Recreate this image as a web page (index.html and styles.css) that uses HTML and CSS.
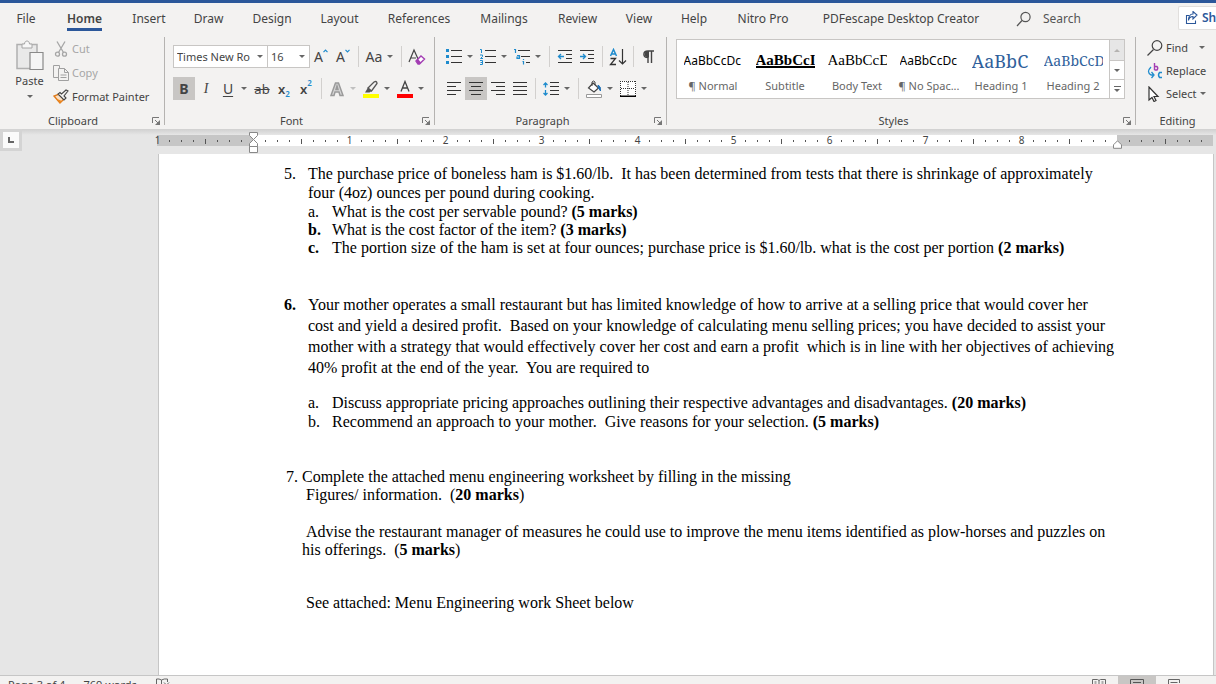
FILE: index.html
```html
<!DOCTYPE html>
<html lang="en">
<head>
<meta charset="utf-8">
<title>Document editor</title>
<link rel="stylesheet" href="styles.css">
</head>
<body>
<div class="app">
  <header class="topbar">
    <nav class="tabs">
      <button class="tab">File</button>
      <button class="tab active">Home</button>
      <button class="tab">Insert</button>
      <button class="tab">Draw</button>
      <button class="tab">Design</button>
      <button class="tab">Layout</button>
      <button class="tab">References</button>
      <button class="tab">Mailings</button>
      <button class="tab">Review</button>
      <button class="tab">View</button>
      <button class="tab">Help</button>
      <button class="tab">Nitro Pro</button>
      <button class="tab">PDFescape Desktop Creator</button>
    </nav>
    <label class="search">
      <svg width="16" height="16" viewBox="0 0 16 16" fill="none" stroke="#555" stroke-width="1.2"><circle cx="9.5" cy="6" r="4.6"/><path d="M6 9.5L1 15"/></svg>
      <input type="text" placeholder="Search" aria-label="Search">
    </label>
    <button class="share">
      <svg width="13" height="14" viewBox="0 0 13 14" fill="none" stroke="#2b579a" stroke-width="1.1"><path d="M4 4.5H1.5v8h9V9.500"/><path d="M3.500 9.500C4 6.500 5.500 5.500 8 5.500V8l4-4-4-3.500V3C5 3 3.500 5.500 3.500 9.500z"/></svg>
      <span>Share</span>
    </button>
  </header>

  <section class="ribbon">
    <div class="group clipboard">
      <div class="body">
        <button class="paste">
          <svg width="28" height="32" viewBox="0 0 28 32" fill="none"><path d="M1 4.500h20v24H1z" fill="#e9e9e9" stroke="#b0b0b0" stroke-width="1.500"/><path d="M6 8V4h2.500c0-4 5-4 5 0H16v4z" fill="#f7f7f7" stroke="#a6a6a6"/><path d="M14 12.500h13v17H14z" fill="#f5f5f5" stroke="#8a8a8a" stroke-width="1.200"/></svg>
          <span>Paste</span>
          <i class="arrow"></i>
        </button>
        <div class="stack">
          <button class="cmd off"><svg width="16" height="16" viewBox="0 0 16 16" fill="none" stroke="#a6a6a6" stroke-width="1.300"><path d="M4 0.500l6.500 11M12 0.500L5.500 11.500"/><circle cx="4.500" cy="13.200" r="2"/><circle cx="11.500" cy="13.200" r="2"/></svg><span>Cut</span></button>
          <button class="cmd off"><svg width="16" height="16" viewBox="0 0 16 16" fill="#f3f2f1" stroke="#a0a0a0"><path d="M.5.500h6v12h-6z"/><path d="M5.500 3.500h6l4 4v8h-10z"/><path d="M11.500 3.500v4h4M7.500 10h6M7.500 12.500h6" fill="none"/></svg><span>Copy</span></button>
          <button class="cmd"><svg width="16" height="16" viewBox="0 0 16 16" fill="none"><path d="M1 7l6 7 4-4-5-5z" fill="#fbe0c4" stroke="#e07b1a" stroke-width="1.400"/><path d="M3 9.500l4 4.500 2-2z" fill="#ee8a22"/><path d="M5 5l6 6 2-2-2-2 4-5-2-1-4.500 4L7 3.500z" fill="#f3f2f1" stroke="#444" stroke-width="1.100"/></svg><span>Format Painter</span></button>
        </div>
      </div>
      <div class="caption"><span>Clipboard</span><svg class="launch" width="9" height="8" viewBox="0 0 9 8"><use href="#launcher"/></svg></div>
    </div>

    <div class="group font">
      <div class="body rows">
        <div class="row">
          <span class="combo name"><select aria-label="Font"><option>Times New Ro</option></select></span>
          <span class="combo size"><select aria-label="Font size"><option>16</option></select></span>
          <button class="tool" aria-label="Grow font"><span class="glyph">A</span><svg class="sup" width="5" height="4" viewBox="0 0 5 4" fill="none" stroke="#1e8bcd" stroke-width="1.200"><path d="M.5 3.200l2-2 2 2"/></svg></button>
          <button class="tool" aria-label="Shrink font"><span class="glyph">A</span><svg class="sup" width="5" height="4" viewBox="0 0 5 4" fill="none" stroke="#1e8bcd" stroke-width="1.200"><path d="M.5.800l2 2 2-2"/></svg></button>
          <i class="sep"></i>
          <button class="tool glyph">Aa</button><button class="drop" aria-label="Change case"><i class="arrow"></i></button>
          <i class="sep"></i>
          <button class="tool" aria-label="Clear formatting"><svg width="18" height="18" viewBox="0 0 18 18" fill="none"><path d="M1 14L6 2l4.500 10M3 10h5" stroke="#444" stroke-width="1.200"/><path d="M8 13l5-5 3.500 3-5 5H10z" fill="#fff" stroke="#a33db3" stroke-width="1.400"/><path d="M8 13l2-2 3 3.500-1.500 1.500H10z" fill="#a33db3"/></svg></button>
        </div>
        <div class="row">
          <button class="tool on glyph strong">B</button>
          <button class="tool glyph italic">I</button>
          <button class="tool glyph under">U</button><button class="drop" aria-label="Underline style"><i class="arrow"></i></button>
          <button class="tool glyph strike">ab</button>
          <button class="tool glyph bold">x<sub>2</sub></button>
          <button class="tool glyph bold">x<sup>2</sup></button>
          <i class="sep"></i>
          <button class="tool" aria-label="Text effects"><svg width="16" height="16" viewBox="0 0 16 16" fill="none"><path d="M2 14.500L6.500 2h3L14 14.500h-3L10 11H6l-1 3.500zM7 8.500h2L8 5z" fill="#d6d6d6" stroke="#9a9a9a" stroke-width="1.500"/></svg></button><button class="drop off" aria-label="Effects menu"><i class="arrow"></i></button>
          <button class="tool" aria-label="Highlight"><svg width="18" height="18" viewBox="0 0 18 18"><path d="M6 8l6-6q3-1.500 3 1.500L9.500 11z" fill="#f3f2f1" stroke="#555" stroke-width="1.300"/><path d="M6 7.500L9.500 11l-2 1.500H3z" fill="#555"/><path d="M1 14h16v4H1z" fill="#ff0"/></svg></button><button class="drop" aria-label="Highlight colour"><i class="arrow"></i></button>
          <button class="tool" aria-label="Font colour"><svg width="18" height="18" viewBox="0 0 18 18"><path d="M5 11.500L9 1.500l4 10M6.500 8h5" fill="none" stroke="#444" stroke-width="1.300"/><path d="M1 14h16v4H1z" fill="#f00"/></svg></button><button class="drop" aria-label="Font colour menu"><i class="arrow"></i></button>
        </div>
      </div>
      <div class="caption"><span>Font</span><svg class="launch" width="9" height="8" viewBox="0 0 9 8"><use href="#launcher"/></svg></div>
    </div>

    <div class="group paragraph">
      <div class="body rows">
        <div class="row">
          <button class="tool" aria-label="Bullets"><svg width="16" height="16" viewBox="0 0 16 16"><path d="M0 0h3v3H0zM0 6h3v3H0zM0 12h3v3H0z" fill="#1e8bcd"/><path d="M5 1h11v1H5zM5 7h11v1H5zM5 13h11v1H5z" fill="#333"/></svg></button><button class="drop" aria-label="Bullet styles"><i class="arrow"></i></button>
          <button class="tool" aria-label="Numbering"><svg width="16" height="16" viewBox="0 0 16 16"><path d="M0 .5h1.500V4M0 6h2.500v1.500L.5 9.500H3M0 11.500h2.500v4H0M.5 13.500h2" fill="none" stroke="#1e8bcd"/><path d="M5 1h11v1H5zM5 7h11v1H5zM5 13h11v1H5z" fill="#333"/></svg></button><button class="drop" aria-label="Number styles"><i class="arrow"></i></button>
          <button class="tool" aria-label="Multilevel list"><svg width="16" height="16" viewBox="0 0 16 16"><path d="M0 .5h1.500V4M3 6.500h2.500v3H3v-1.500h2.500M9.500 10v1M8.500 12.500h1v3" fill="none" stroke="#1e8bcd" stroke-width="1.200"/><path d="M4 1h12v1H4zM7 7h9v1H7zM12 13h4v1h-4z" fill="#333"/></svg></button><button class="drop" aria-label="List levels"><i class="arrow"></i></button>
          <i class="sep"></i>
          <button class="tool" aria-label="Decrease indent"><svg width="16" height="16" viewBox="0 0 16 16"><path d="M1 1h14v1H1zM9 5h6v1H9zM9 9h6v1H9zM1 13h14v1H1z" fill="#333"/><path d="M7 7.500H1.500M4 5L1.500 7.500 4 10" fill="none" stroke="#1e8bcd" stroke-width="1.300"/></svg></button>
          <button class="tool" aria-label="Increase indent"><svg width="16" height="16" viewBox="0 0 16 16"><path d="M1 1h14v1H1zM9 5h6v1H9zM9 9h6v1H9zM1 13h14v1H1z" fill="#333"/><path d="M1 7.500h5.500M4 5l2.500 2.500L4 10" fill="none" stroke="#1e8bcd" stroke-width="1.300"/></svg></button>
          <i class="sep"></i>
          <button class="tool" aria-label="Sort"><svg width="18" height="18" viewBox="0 0 18 18" fill="none"><path d="M1.500 8L4.500 1.500 7.500 8M2.500 6h4" stroke="#1e8bcd" stroke-width="1.500"/><path d="M1.500 10.500h5l-5 6h5.500" stroke="#333" stroke-width="1.300"/><path d="M13.500 1v15M10 12.500l3.500 3.500 3.500-3.500" stroke="#333" stroke-width="1.200"/></svg></button>
          <i class="sep"></i>
          <button class="tool" aria-label="Show paragraph marks"><svg width="12" height="14" viewBox="0 0 12 14"><path d="M11 1H5C-.5 1-.5 7.500 5 7.500V13M8.500 1v12" fill="none" stroke="#444" stroke-width="1.400"/><path d="M6 1C0 .5 0 7.500 6 7.500z" fill="#444"/></svg></button>
        </div>
        <div class="row">
          <button class="tool" aria-label="Align left"><svg width="14" height="14" viewBox="0 0 14 14"><path d="M0 0h14v1H0zM0 4h9v1H0zM0 8h14v1H0zM0 12h9v1H0z" fill="#333"/></svg></button>
          <button class="tool on" aria-label="Center"><svg width="14" height="14" viewBox="0 0 14 14"><path d="M0 0h14v1H0zM2 4h10v1H2zM0 8h14v1H0zM2 12h10v1H2z" fill="#333"/></svg></button>
          <button class="tool" aria-label="Align right"><svg width="14" height="14" viewBox="0 0 14 14"><path d="M0 0h14v1H0zM5 4h9v1H5zM0 8h14v1H0zM5 12h9v1H5z" fill="#333"/></svg></button>
          <button class="tool" aria-label="Justify"><svg width="14" height="14" viewBox="0 0 14 14"><path d="M0 0h14v1H0zM0 4h14v1H0zM0 8h14v1H0zM0 12h14v1H0z" fill="#333"/></svg></button>
          <i class="sep"></i>
          <button class="tool" aria-label="Line spacing"><svg width="16" height="14" viewBox="0 0 16 14"><path d="M7 0h9v1H7zM7 4h9v1H7zM7 8h9v1H7zM7 12h9v1H7z" fill="#333"/><path d="M2.500 1v4.500M.5 3l2-2 2 2M2.500 8v5M.5 11l2 2 2-2" fill="none" stroke="#1e8bcd" stroke-width="1.300"/></svg></button><button class="drop" aria-label="Spacing options"><i class="arrow"></i></button>
          <i class="sep"></i>
          <button class="tool" aria-label="Shading"><svg width="18" height="18" viewBox="0 0 18 18"><path d="M8 3l5.500 5L9 12 3.500 8z" fill="#fff" stroke="#444" stroke-width="1.200"/><path d="M7 6V2q1.500-2 3 0v3" fill="none" stroke="#444"/><path d="M13 5q3 1 2.500 6l-2-3z" fill="#1e6fb5" stroke="#1e6fb5"/><path d="M1.500 14.500h15v3h-15z" fill="#fff" stroke="#999"/></svg></button><button class="drop" aria-label="Shading colour"><i class="arrow"></i></button>
          <button class="tool" aria-label="Borders"><svg width="16" height="16" viewBox="0 0 16 16"><path d="M0 0h16v16H0z" fill="#fff"/><path d="M0 .5h16M.5 0v15M15.500 0v15M8 1v14M1 7.500h14" fill="none" stroke="#333" stroke-dasharray="1 1"/><path d="M0 14.500h16V16H0z" fill="#000"/></svg></button><button class="drop" aria-label="Border styles"><i class="arrow"></i></button>
        </div>
      </div>
      <div class="caption"><span>Paragraph</span><svg class="launch" width="9" height="8" viewBox="0 0 9 8"><use href="#launcher"/></svg></div>
    </div>

    <div class="group styles">
      <div class="body">
        <div class="gallery">
          <button class="style"><span class="sample">AaBbCcDc</span><span>¶ Normal</span></button>
          <button class="style"><span class="sample serif subtitle">AaBbCcI</span><span>Subtitle</span></button>
          <button class="style"><span class="sample serif">AaBbCcDd</span><span>Body Text</span></button>
          <button class="style"><span class="sample">AaBbCcDc</span><span>¶ No Spac...</span></button>
          <button class="style"><span class="sample heading large">AaBbC</span><span>Heading 1</span></button>
          <button class="style"><span class="sample heading">AaBbCcD</span><span>Heading 2</span></button>
          <div class="scroller">
            <button class="off" aria-label="Previous styles"><i class="arrow up"></i></button>
            <button aria-label="Next styles"><i class="arrow"></i></button>
            <button class="more" aria-label="More styles"><i class="arrow"></i></button>
          </div>
        </div>
      </div>
      <div class="caption"><span>Styles</span><svg class="launch" width="9" height="8" viewBox="0 0 9 8"><use href="#launcher"/></svg></div>
    </div>

    <div class="group editing">
      <div class="body stack">
        <button class="cmd"><svg width="16" height="16" viewBox="0 0 16 16" fill="none" stroke="#444" stroke-width="1.200"><circle cx="10" cy="5.500" r="4.800"/><path d="M6.500 9.500L.5 15.500"/></svg><span>Find</span><i class="arrow far"></i></button>
        <button class="cmd"><svg width="16" height="16" viewBox="0 0 16 16" fill="none"><path d="M7.500 0v7M7.500 3.500h2.500q1.500 1.500 0 3.500H7.500" stroke="#a33db3" stroke-width="1.400"/><path d="M15 9.500h-2.500q-2 2.500 0 5H15" stroke="#1e8bcd" stroke-width="1.400"/><path d="M4 4Q-1 9 4 12h2M4.500 9L7 12l-2.500 3" stroke="#1e8bcd" stroke-width="1.300"/></svg><span>Replace</span></button>
        <button class="cmd"><svg width="16" height="16" viewBox="0 0 16 16" fill="#fff" stroke="#333" stroke-width="1.200"><path d="M2 1v13l3-2.500 2 4 2-1-2-4h4z"/></svg><span>Select</span><i class="arrow"></i></button>
      </div>
      <div class="caption"><span>Editing</span></div>
    </div>
  </section>

  <div class="ruler">
    <button class="tabstop" aria-label="Tab stop"><i></i></button>
    <div class="scale">
      <div class="inch shade"><b>1</b><svg width="96" height="11"><use href="#ticks"/></svg></div>
      <div class="inch"><b></b><svg width="96" height="11"><use href="#ticks"/></svg></div>
      <div class="inch"><b>1</b><svg width="96" height="11"><use href="#ticks"/></svg></div>
      <div class="inch"><b>2</b><svg width="96" height="11"><use href="#ticks"/></svg></div>
      <div class="inch"><b>3</b><svg width="96" height="11"><use href="#ticks"/></svg></div>
      <div class="inch"><b>4</b><svg width="96" height="11"><use href="#ticks"/></svg></div>
      <div class="inch"><b>5</b><svg width="96" height="11"><use href="#ticks"/></svg></div>
      <div class="inch"><b>6</b><svg width="96" height="11"><use href="#ticks"/></svg></div>
      <div class="inch"><b>7</b><svg width="96" height="11"><use href="#ticks"/></svg></div>
      <div class="inch"><b>8</b><svg width="96" height="11"><use href="#ticks"/></svg></div>
      <div class="inch shade"><b></b><svg width="96" height="11"><use href="#ticks"/></svg></div>
      <svg class="marker left" width="10" height="22" viewBox="0 0 10 22" fill="#fff" stroke="#888"><path d="M.5.500h8v3l-4 4-4-4zM4.500 7.500l4 4v3h-8v-3zM.5 14.500h8v6h-8z"/></svg>
      <svg class="marker right" width="10" height="9" viewBox="0 0 10 9" fill="#fff" stroke="#888"><path d="M4.500.800l4 4v3.500h-8V4.800z"/></svg>
    </div>
  </div>

  <main class="canvas">
    <article class="page">
      <section class="item q5">
        <span>5.</span>
        <div>
          <p class="stem">The purchase price of boneless ham is $1.60/lb.&nbsp; It has been determined from tests that there is shrinkage of approximately<br>four (4oz) ounces per pound during cooking.</p>
          <div class="sub"><span>a.</span><p>What is the cost per servable pound? <b>(5 marks)</b></p></div>
          <div class="sub"><b>b.</b><p>What is the cost factor of the item? <b>(3 marks)</b></p></div>
          <div class="sub"><b>c.</b><p>The portion size of the ham is set at four ounces; purchase price is $1.60/lb. what is the cost per portion <b>(2 marks)</b></p></div>
        </div>
      </section>
      <section class="item q6">
        <b>6.</b>
        <div>
          <p class="loose">Your mother operates a small restaurant but has limited knowledge of how to arrive at a selling price that would cover her<br>cost and yield a desired profit.&nbsp; Based on your knowledge of calculating menu selling prices; you have decided to assist your<br>mother with a strategy that would effectively cover her cost and earn a profit&nbsp; which is in line with her objectives of achieving<br>40% profit at the end of the year.&nbsp; You are required to</p>
          <div class="sub"><span>a.</span><p>Discuss appropriate pricing approaches outlining their respective advantages and disadvantages. <b>(20 marks)</b></p></div>
          <div class="sub"><span>b.</span><p>Recommend an approach to your mother.&nbsp; Give reasons for your selection. <b>(5 marks)</b></p></div>
        </div>
      </section>
      <section class="q7">
        <p>7. Complete the attached menu engineering worksheet by filling in the missing</p>
        <p class="inset">&nbsp;Figures/ information.&nbsp; (<b>20 marks</b>)</p>
        <p class="inset advise">&nbsp;Advise the restaurant manager of measures he could use to improve the menu items identified as plow-horses and puzzles on<br>his offerings.&nbsp; (<b>5 marks</b>)</p>
        <p class="inset see">&nbsp;See attached: Menu Engineering work Sheet below</p>
      </section>
    </article>
  </main>

  <footer class="status">
    <span>Page 3 of 4</span>
    <span>769 words</span>
    <svg width="16" height="14" viewBox="0 0 16 14" fill="none" stroke="#666"><path d="M6.500 2Q4 .5 1.500 1v10.500q3-.5 5 1zq2.500-1.500 6-1v3M9 4.500l5 5M14 4.500l-5 5"/></svg>
    <div class="views">
      <button aria-label="Read mode"><svg width="14" height="12" viewBox="0 0 14 12" fill="none" stroke="#666"><path d="M.5.500h5l1.500 1 1.500-1h5v9h-5l-1.500 1-1.500-1h-5zM7 1.500v9M2.500 3h2M2.500 5h2M9.500 3h2M9.500 5h2"/></svg></button>
      <button class="on" aria-label="Print layout"><svg width="14" height="12" viewBox="0 0 14 12" fill="none" stroke="#555"><path d="M.5.500h13v11H.5zM3 3.500h8M3 6h8M3 8.500h8"/></svg></button>
      <button aria-label="Web layout"><svg width="14" height="12" viewBox="0 0 14 12" fill="none" stroke="#666"><path d="M6 10.500H.5v-10h11V4M2.500 3.500h7M2.500 6h4"/><circle cx="10" cy="8.500" r="3"/></svg></button>
    </div>
  </footer>
</div>

<svg class="defs" width="0" height="0">
  <defs>
    <g id="launcher"><path d="M.5 6V.5H7" fill="none" stroke="#777"/><path d="M3 3l4 4" stroke="#777"/><path d="M8 3v5H3z" fill="#777"/></g>
    <path id="ticks" fill="#555" d="M12 5h1v2h-1zM24 5h1v2h-1zM36 5h1v2h-1zM48 4h1v5h-1zM60 5h1v2h-1zM72 5h1v2h-1zM84 5h1v2h-1z"/>
  </defs>
</svg>
</body>
</html>
```
FILE: styles.css
```css
* { box-sizing: border-box; }
body {
  margin: 0;
  height: 100vh;
  overflow: hidden;
  background: #e6e6e6;
  color: #444;
  font: 12px/16px "Noto Sans", "Open Sans", sans-serif;
}
p { margin: 0; }
button {
  padding: 0;
  border: 0;
  background: none;
  color: inherit;
  font: inherit;
  white-space: nowrap;
}
svg { flex: none; display: block; }
.defs { position: absolute; }

/* The window is slightly taller than the viewport. */
.app {
  display: flex;
  flex-direction: column;
  height: calc(100vh + 9px);
}

/* Tabs */
.topbar {
  display: flex;
  flex: none;
  height: 37px;
  border-top: 3px solid #2b579a;
  background: #f3f2f1;
  overflow: hidden;
}
.tabs {
  display: grid;
  flex: none;
  grid-template-columns: 48px 69px 60px 59px 68px 67px 92px 78px 69px 54px 56px 82px 194px;
  padding-left: 2px;
}
.tab {
  justify-self: center;
  height: 28px;
  padding-top: 4px;
}
.tab.active {
  border-bottom: 3px solid #2b579a;
  padding-top: 7px;
  font-weight: 600;
}
.search {
  display: flex;
  flex: 1 1 180px;
  align-items: center;
  gap: 11px;
  height: 32px;
  padding-left: 18px;
}
.search input {
  width: 100px;
  padding: 0;
  border: 0;
  background: none;
  font: inherit;
}
.search input::placeholder { color: #555; opacity: 1; }
.share {
  display: flex;
  flex: none;
  align-items: center;
  gap: 4px;
  width: 38px;
  height: 24px;
  margin-top: 3px;
  padding-left: 6px;
  border: 1px solid #e1dfdd;
  border-right: 0;
  border-radius: 2px 0 0 2px;
  background: #fff;
  color: #2b579a;
  font-weight: 600;
  overflow: hidden;
}

/* Ribbon */
.ribbon {
  display: flex;
  flex: none;
  height: 92px;
  background: #f3f2f1;
  overflow: hidden;
}
.group {
  display: flex;
  flex: none;
  flex-direction: column;
  justify-content: space-between;
  height: 92px;
  position: relative;
}
.group:not(.editing)::after {
  content: "";
  position: absolute;
  right: 0;
  top: 0;
  width: 1px;
  height: 88px;
  background: #b5b3b1;
}
.clipboard { width: 165px; }
.font { width: 270px; padding-left: 8px; }
.paragraph { width: 232px; padding-left: 8px; }
.styles { flex: 1 0 469px; padding-left: 9px; }
.editing { width: 80px; padding-left: 11px; }
.body { display: flex; }
.caption {
  display: flex;
  align-items: center;
  height: 16px;
  padding-right: 4px;
  font-size: 11px;
}
.caption span { flex: 1; text-align: center; padding-right: 12px; }
.clipboard .caption span { padding-right: 6px; }
.editing .caption { padding-right: 8px; }
.editing .caption span { padding: 0; }

.arrow {
  flex: none;
  width: 0;
  height: 0;
  border: 3px solid transparent;
  border-top-color: #666;
  border-bottom: 0;
}
.arrow.up {
  border: 3px solid transparent;
  border-bottom-color: #b5b3b1;
  border-top: 0;
}
.arrow.far { margin-left: 8px; }
.off { color: #a6a6a6; }
.off .arrow { border-top-color: #c0c0c0; }
.off .arrow.up { border-top-color: transparent; border-bottom-color: #b5b3b1; }

.paste {
  display: flex;
  flex-direction: column;
  align-items: center;
  width: 53px;
  padding: 3px 0 0 6px;
  gap: 1px;
  font-size: 11px;
}
.paste .arrow { margin-top: 5px; }
.stack { display: flex; flex-direction: column; }
.cmd {
  display: flex;
  align-items: center;
  gap: 3px;
  height: 24px;
  font-size: 11px;
}
.editing .cmd { height: 23px; padding-bottom: 2px; }

/* Tool rows */
.rows { flex-direction: column; gap: 9px; padding-top: 8px; }
.row { display: flex; height: 23px; }
.tool {
  display: flex;
  flex: none;
  align-items: center;
  justify-content: center;
  width: 22px;
}
.tool.on, .views .on { background: #c8c6c4; }
.drop {
  display: flex;
  flex: none;
  align-items: center;
  justify-content: center;
  width: 10px;
  margin-right: 2px;
}
.sep {
  flex: none;
  width: 1px;
  margin: 1px 4px;
  background: #d2d0ce;
}
.glyph { font-size: 14px; }
.sup { align-self: flex-start; margin-top: 4px; }
.strong { font-weight: 700; }
.bold { font-weight: 600; font-size: 13px; }
.italic { font-style: italic; font-family: "Liberation Serif", serif; }
.under { text-decoration: underline; text-underline-offset: 2px; }
.strike { font-size: 13px; text-decoration: line-through; }
.tool sub, .tool sup { color: #1e8bcd; font-size: 8px; line-height: 8px; }
.tool sub { align-self: flex-end; margin-bottom: 2px; }
.tool sup { align-self: flex-start; margin-top: 2px; }

.combo {
  display: flex;
  align-items: center;
  border: 1px solid #c8c6c4;
  background: #fff;
  padding-right: 4px;
  font-size: 11px;
}
.combo::after {
  content: "";
  border: 3px solid transparent;
  border-top-color: #666;
  border-bottom: 0;
}
.combo select {
  flex: 1;
  min-width: 0;
  padding: 0 0 0 3px;
  border: 0;
  appearance: none;
  background: none;
  color: inherit;
  font: inherit;
}
.combo.name { width: 95px; }
.combo.size { width: 42px; border-left: 0; }

/* Style gallery */
.gallery {
  display: flex;
  height: 60px;
  margin-top: 2px;
  border: 1px solid #c8c6c4;
  background: #fff;
}
.style {
  display: flex;
  flex-direction: column;
  align-items: center;
  width: 72px;
  padding-top: 10px;
  color: #666;
  font-size: 11px;
}
.sample {
  width: 59px;
  height: 20px;
  margin-bottom: 8px;
  overflow: hidden;
  color: #000;
  font-size: 12px;
  line-height: 22px;
  text-align: left;
}
.serif { font-family: "Liberation Serif", serif; font-size: 15px; line-height: 20px; }
.subtitle { font-weight: 700; text-decoration: underline; text-decoration-thickness: 2px; }
.heading { color: #2f5f9b; font-family: "Noto Serif", "DejaVu Serif", serif; font-size: 14px; }
.large { font-size: 18px; }
.scroller {
  display: grid;
  grid-template-rows: 21px 19px 18px;
  width: 15px;
  border-left: 1px solid #c8c6c4;
}
.scroller button {
  display: flex;
  flex-direction: column;
  align-items: center;
  justify-content: center;
  gap: 2px;
  border-bottom: 1px solid #c8c6c4;
}
.scroller .off { background: #e6e6e6; }
.scroller .more { border-bottom: 0; }
.more::before { content: ""; width: 7px; height: 1px; background: #666; }

/* Ruler */
.ruler {
  display: flex;
  flex: none;
  height: 25px;
  background: linear-gradient(#d0d0d0, #e6e6e6 6px);
}
.tabstop {
  display: flex;
  flex: none;
  align-items: center;
  justify-content: center;
  width: 22px;
  height: 22px;
  border: 3px solid #d4d4d4;
  background: #fafafa;
}
.tabstop i { width: 6px; height: 6px; border: solid #666; border-width: 0 0 2px 2px; }
.scale {
  position: relative;
  display: flex;
  height: 11px;
  margin: 6px 3px 0 135px;
  min-width: 0;
  flex: 1;
}
.inch {
  display: grid;
  flex: none;
  width: 96px;
  background: #fff;
}
.inch > * { grid-area: 1 / 1; }
.inch b {
  width: 9px;
  margin-left: -4px;
  font-weight: 400;
  font-size: 10px;
  line-height: 11px;
  text-align: center;
}
.inch.shade { background: #c6c6c6; }
.marker { position: absolute; }
.marker.left { left: 92px; top: -3px; }
.marker.right { left: 956px; top: 5px; }

/* Document */
.canvas {
  flex: 1;
  min-height: 0;
  padding: 0 2px 0 158px;
  overflow: hidden;
}
.page {
  height: 100%;
  padding: 10px 0 0 125px;
  border: solid #c6c6c6;
  border-width: 0 1px;
  background: #fff;
  color: #000;
  font: 16px/18px "Liberation Serif", "Times New Roman", serif;
  white-space: nowrap;
}
.item, .sub { display: grid; grid-template-columns: 24px 1fr; }
.stem, .q5 > span { line-height: 19px; }
.stem { margin-bottom: 1px; }
.q6 { margin-top: 37px; line-height: 19px; }
.q6 > b, .loose { line-height: 21px; }
.loose { margin-bottom: 15px; }
.q7 { margin-top: 37px; padding-left: 2px; }
.inset { padding-left: 16px; }
.advise { margin-top: 19px; }
.see { margin-top: 35px; }

/* Status bar */
.status {
  display: flex;
  flex: none;
  align-items: center;
  gap: 18px;
  height: 18px;
  padding-left: 8px;
  border-top: 1px solid #c6c6c6;
  background: #f3f2f1;
  font-size: 11px;
  line-height: 12px;
}
.views {
  display: flex;
  align-self: stretch;
  margin-left: auto;
  padding-right: 22px;
}
.views button { display: flex; align-items: flex-start; justify-content: center; width: 38px; padding-top: 3px; }
```
